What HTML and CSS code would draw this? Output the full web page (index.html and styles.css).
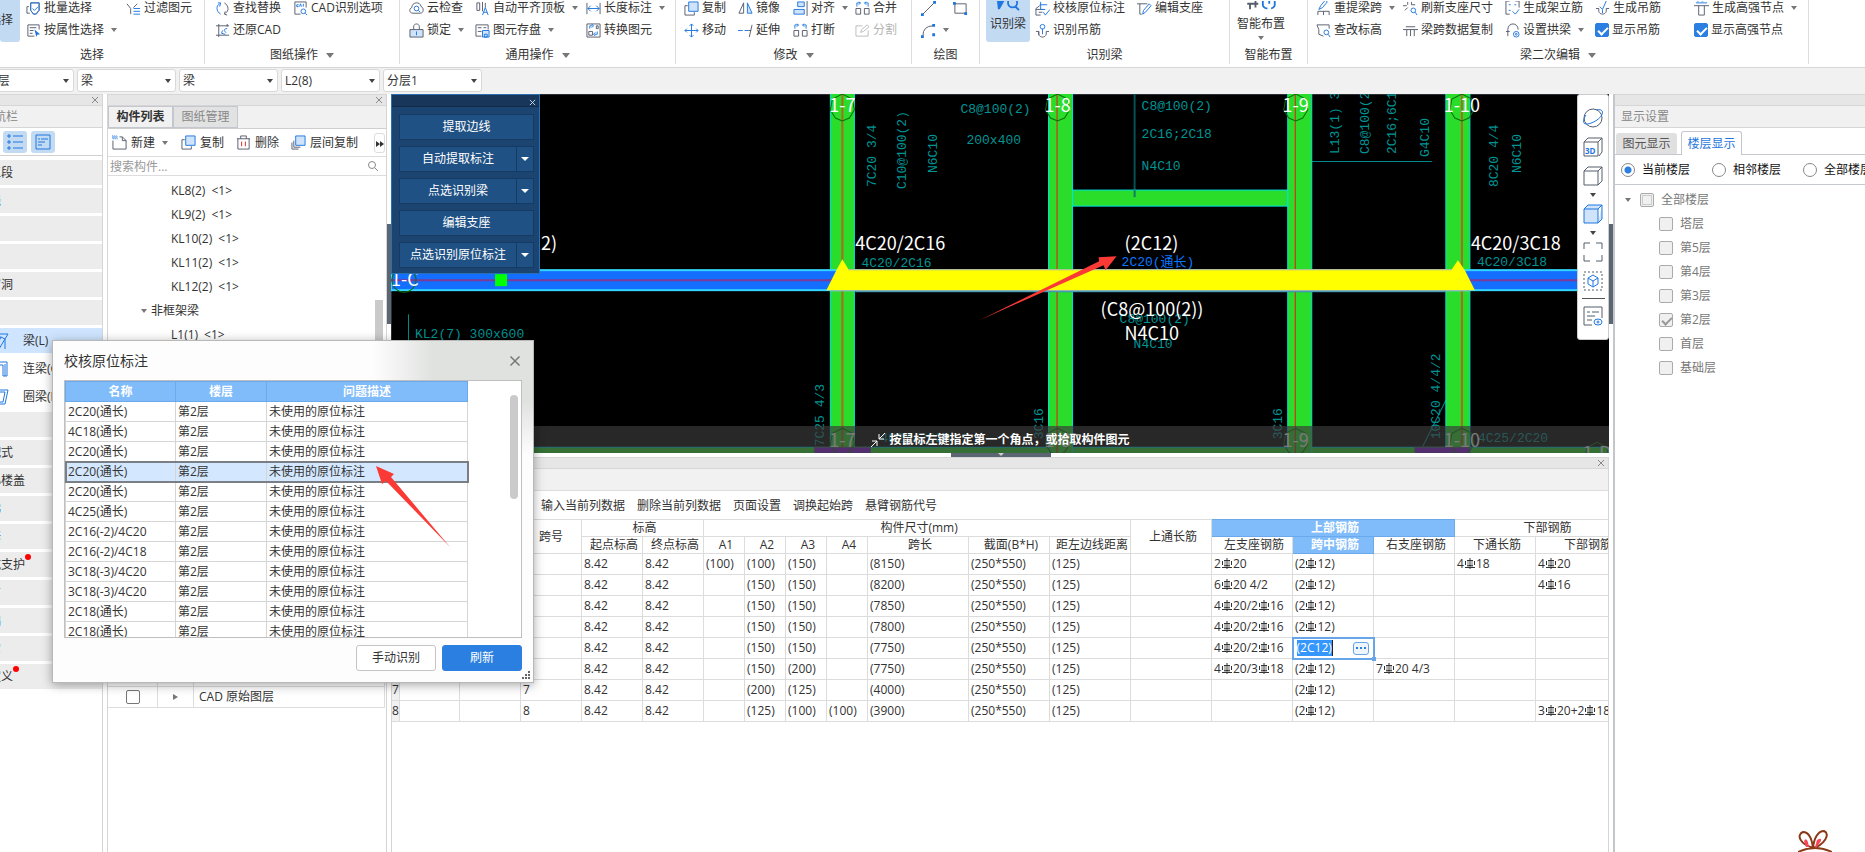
FILE: index.html
```html
<!DOCTYPE html>
<html lang="zh-CN">
<head>
<meta charset="utf-8">
<title>梁平法表格</title>
<link rel="stylesheet" href="styles.css">
</head>
<body>
<svg class="sprite" aria-hidden="true">
  <defs>
    <symbol id="batch" viewBox="0 0 16 16"><path d="M3 6H1v7h3M5 2h9v8l-4 4H8l-3-4z"/><path class="b" d="M5 2h9v8l-3 4H8l-3-4zM7 8l2 2 4-4"/></symbol>
    <symbol id="attr" viewBox="0 0 16 16"><path d="M9 14H2V2h12v5M4 5h7M4 8h4M4 11h3"/><path class="fb" d="M9 7l6 5-3 .500L11 15z"/></symbol>
    <symbol id="filter" viewBox="0 0 16 16"><path d="M1 3l4 5v6M12 3L8 7"/><path class="b" d="M8 8h7M8 11h7M8 14h7"/></symbol>
    <symbol id="swap" viewBox="0 0 16 16"><path class="b" d="M6 14C1 11 1 5 5 3M3 2l3 0-1 4"/><path d="M10 2c5 3 5 9 1 11M13 15l-3-1 1-3"/></symbol>
    <symbol id="cadopt" viewBox="0 0 16 16"><path d="M8 14H2V1h12v6"/><path class="b" d="M4 4h2M7 6l1-3 1 3M11 3v3M4 4v2h2"/><circle class="b" cx="11" cy="11" r="2.500"/><path class="b" d="M13 13l2 2"/></symbol>
    <symbol id="restore" viewBox="0 0 16 16"><path d="M4 1v14M1 3h14M4 13h11M1 13h3M13 1v3"/><path class="b" d="M13 6c-4 0-4 3-1 4M8 8l-1 3 4 1"/></symbol>
    <symbol id="cloud" viewBox="0 0 16 16"><path d="M4 13c-4 0-4-5-1-6 0-6 9-7 10-1 3 1 3 7-1 7z"/><circle class="b" cx="8" cy="8" r="2.500"/><path class="b" d="M10 10l2 2"/></symbol>
    <symbol id="lock" viewBox="0 0 16 16"><path d="M5 7V4c0-4 6-4 6 0v3"/><path class="lb" d="M1 7h14v8H1z"/><path class="b" d="M8 9v4"/></symbol>
    <symbol id="flush" viewBox="0 0 16 16"><path d="M2 2v8h3V2zM8 1v10M11 2v5"/><path class="b" d="M8 15l3-8 3 8M9 12h4"/></symbol>
    <symbol id="save" viewBox="0 0 16 16"><path d="M7 14H1V2h13v5M3 5h4M3 9h4M9 5h3"/><path class="lbb" d="M8 8h7v7H8zM10 12h3v3h-3z"/></symbol>
    <symbol id="dim" viewBox="0 0 16 16"><path d="M1 2v12M15 2v12"/><path class="b" d="M2 8h12M5 5L2 8l3 3M11 5l3 3-3 3"/></symbol>
    <symbol id="convert" viewBox="0 0 16 16"><path d="M1 1h14v14H1z"/><path d="M3 9h4v4H3zM11 3h2v3h-2z"/><path class="b" d="M4 6V3h3M6 1l2 2-2 2M12 9v3H9M10 10l-2 2 2 2"/></symbol>
    <symbol id="copy" viewBox="0 0 16 16"><path d="M4 5H1v10h10v-3"/><path class="lbb" d="M5 1h10v10H5z"/></symbol>
    <symbol id="move" viewBox="0 0 16 16"><path class="b" d="M8 1v14M1 8h14M6 3l2-2 2 2M6 13l2 2 2-2M3 6L1 8l2 2M13 6l2 2-2 2"/></symbol>
    <symbol id="mirror" viewBox="0 0 16 16"><path d="M6 2v11H1z"/><path class="lbb" d="M10 2v11h5z"/></symbol>
    <symbol id="extend" viewBox="0 0 16 16"><path class="b" d="M0 8h5M7 8h4"/><path d="M11 8h3M15 2l-3 13"/></symbol>
    <symbol id="align" viewBox="0 0 16 16"><path class="lbb" d="M5 1h7v5H5zM1 9h11v5H1z"/><path d="M15 0v16"/></symbol>
    <symbol id="break" viewBox="0 0 16 16"><path d="M1 8h5v6H1zM10 8h5v6h-5z"/><path class="b" d="M2 6V2h3M4 1l2 1-2 2M14 6V2h-3M12 1l-2 1 2 2"/></symbol>
    <symbol id="split" viewBox="0 0 16 16"><path class="g" d="M8 3H1v11h13V8M6 10l1-3 6-5 2 2-6 5z"/></symbol>
    <symbol id="line" viewBox="0 0 16 16"><path d="M2 14L14 2"/><path class="fb" d="M0 13h3v3H0zM13 0h3v3h-3z"/></symbol>
    <symbol id="rect" viewBox="0 0 16 16"><path d="M2 3h12v10H2z"/><path class="fb" d="M0 1h3v3H0zM12 12h3v3h-3z"/></symbol>
    <symbol id="arc" viewBox="0 0 16 16"><path d="M2 14Q2 3 13 3"/><path class="fb" d="M0 13h3v3H0zM12 1h3v3h-3zM12 11h3v3h-3z"/></symbol>
    <symbol id="verify" viewBox="0 0 16 16"><path d="M6 15H1V8l4-3M1 9h8M4 12h4"/><path class="b" d="M5 4h8M6 1v8h5M9 12l2 3 5-6"/></symbol>
    <symbol id="support" viewBox="0 0 16 16"><path d="M0 3h11M3 3v11h2"/><path class="b" d="M6 14l1-4 6-7 2 2-6 7z"/></symbol>
    <symbol id="hanger" viewBox="0 0 16 16"><path d="M1 9h3v3c1 4 7 4 8 0V9h3M4 9v4"/><circle class="b" cx="8" cy="4" r="2.500"/><path class="b" d="M8 6v6"/></symbol>
    <symbol id="respan" viewBox="0 0 16 16"><path d="M2 15v-4h12v4M8 11v4"/><path class="b" d="M3 9l2-4 5-6 2 2-5 6z"/></symbol>
    <symbol id="refresh" viewBox="0 0 16 16"><path d="M0 5h4M5 1v3M9 4h4M5 7l-3 3M9 1v3"/><circle class="b" cx="11" cy="10" r="2.500"/><path class="b" d="M13 12l2 3"/></symbol>
    <symbol id="erect" viewBox="0 0 16 16"><path d="M5 0H1v14h4M11 0h4v7"/><path class="b" d="M4 4h2M10 4h2M4 10h2M8 11l3 3 4-5"/></symbol>
    <symbol id="gen" viewBox="0 0 16 16"><path d="M1 8h3v3c1 4 7 4 8 0V8h3"/><path class="b" d="M5 6l3 3 4-9M8 9v4"/></symbol>
    <symbol id="node" viewBox="0 0 16 16"><path class="b" d="M2 2h12M3 0h2M8 0h2"/><path d="M0 5h16M5 5v10h6V5"/></symbol>
    <symbol id="level" viewBox="0 0 16 16"><path d="M8 14L3 12V7L1 2h13v4"/><circle class="b" cx="11" cy="10" r="2.500"/><path class="b" d="M13 12l2 3"/></symbol>
    <symbol id="spancopy" viewBox="0 0 16 16"><path d="M3 4h10M0 7h16M4 7v7M8 7v7M12 7v7"/></symbol>
    <symbol id="arch" viewBox="0 0 16 16"><path d="M3 14V7C3-1 14-1 14 7M1 9h4"/><circle class="b" cx="12" cy="12" r="3"/><circle class="b" cx="12" cy="12" r="1"/></symbol>
    <symbol id="new" viewBox="0 0 16 16"><path d="M1 6v9h14V6l-4-4H8M11 2v4h4"/><path class="b" stroke-dasharray="1 1" d="M0 1h5M1 2h5M0 3h5M1 4h5"/></symbol>
    <symbol id="trash" viewBox="0 0 16 16"><path d="M1 4h14M5 4V1h6v3M2 4v11h12V4"/><path class="r" d="M6 7v5M10 7v5"/></symbol>
    <symbol id="layers" viewBox="0 0 16 16"><path d="M3 6v7h7M1 8v7h7"/><path class="lbb" d="M5 1h10v10H5z"/></symbol>
    <symbol id="cube" viewBox="0 0 20 20"><path d="M1 5h14v14H1zM1 5l4-4h14l-4 4M19 1v14l-4 4"/></symbol>
    <symbol id="rebar" viewBox="0 0 10 11"><path class="k" d="M5 0v11M2 2.500h6M2 7.500h6M.500 3v4M9.500 3v4M0 9.500h10"/><path class="k2" d="M3 3v6M7 3v6"/></symbol>
    <symbol id="x" viewBox="0 0 8 8"><path class="x" d="M1 1l6 6M7 1L1 7"/></symbol>
  </defs>
</svg>

<header class="ribbon">
  <section class="group g1">
    <div class="tools">
      <button class="big clip">选择</button>
      <button class="tool"><svg><use href="#batch"/></svg>批量选择</button>
      <button class="tool"><svg><use href="#filter"/></svg>过滤图元</button>
      <button class="tool span2"><svg><use href="#attr"/></svg>按属性选择<i class="caret"></i></button>
    </div>
    <div class="label">选择</div>
  </section>
  <section class="group g2">
    <div class="tools">
      <button class="tool"><svg><use href="#swap"/></svg>查找替换</button>
      <button class="tool"><svg><use href="#cadopt"/></svg>CAD识别选项</button>
      <button class="tool"><svg><use href="#restore"/></svg>还原CAD</button>
    </div>
    <div class="label">图纸操作<i class="caret"></i></div>
  </section>
  <section class="group g3">
    <div class="tools">
      <button class="tool"><svg><use href="#cloud"/></svg>云检查</button>
      <button class="tool"><svg><use href="#flush"/></svg>自动平齐顶板<i class="caret"></i></button>
      <button class="tool"><svg><use href="#dim"/></svg>长度标注<i class="caret"></i></button>
      <button class="tool"><svg><use href="#lock"/></svg>锁定<i class="caret"></i></button>
      <button class="tool"><svg><use href="#save"/></svg>图元存盘<i class="caret"></i></button>
      <button class="tool"><svg><use href="#convert"/></svg>转换图元</button>
    </div>
    <div class="label">通用操作<i class="caret"></i></div>
  </section>
  <section class="group g4">
    <div class="tools">
      <button class="tool"><svg><use href="#copy"/></svg>复制</button>
      <button class="tool"><svg><use href="#mirror"/></svg>镜像</button>
      <button class="tool"><svg><use href="#align"/></svg>对齐<i class="caret"></i></button>
      <button class="tool"><svg><use href="#break"/></svg>合并</button>
      <button class="tool"><svg><use href="#move"/></svg>移动</button>
      <button class="tool"><svg><use href="#extend"/></svg>延伸</button>
      <button class="tool"><svg><use href="#break"/></svg>打断</button>
      <button class="tool" disabled><svg><use href="#split"/></svg>分割</button>
    </div>
    <div class="label">修改<i class="caret"></i></div>
  </section>
  <section class="group g5">
    <div class="tools">
      <button class="tool" aria-label="直线"><svg><use href="#line"/></svg></button>
      <button class="tool" aria-label="矩形"><svg><use href="#rect"/></svg></button>
      <button class="tool" aria-label="弧线"><svg><use href="#arc"/></svg><i class="caret"></i></button>
    </div>
    <div class="label">绘图</div>
  </section>
  <section class="group g6">
    <div class="tools">
      <button class="big"><svg viewBox="0 0 24 12"><path class="fb" d="M0 0h8l-5 9H1z"/><circle class="b2" cx="17" cy="2" r="5"/><path class="b2" d="M20 6l4 4"/></svg>识别梁</button>
      <button class="tool"><svg><use href="#verify"/></svg>校核原位标注</button>
      <button class="tool"><svg><use href="#support"/></svg>编辑支座</button>
      <button class="tool"><svg><use href="#hanger"/></svg>识别吊筋</button>
    </div>
    <div class="label">识别梁</div>
  </section>
  <section class="group g7">
    <div class="tools">
      <button class="big plain"><svg viewBox="0 0 30 12"><path class="d2" d="M0 3h12M3 3v6M9 0v7"/><path class="b2" d="M17 0v4c0 2 2 4 4 4h1M30 0v4c0 2-2 4-4 4M24 0v3"/></svg>智能布置<i class="caret"></i></button>
    </div>
    <div class="label">智能布置</div>
  </section>
  <section class="group g8">
    <div class="tools">
      <button class="tool"><svg><use href="#respan"/></svg>重提梁跨<i class="caret"></i></button>
      <button class="tool"><svg><use href="#refresh"/></svg>刷新支座尺寸</button>
      <button class="tool"><svg><use href="#erect"/></svg>生成架立筋</button>
      <button class="tool"><svg><use href="#gen"/></svg>生成吊筋</button>
      <button class="tool"><svg><use href="#node"/></svg>生成高强节点<i class="caret"></i></button>
      <button class="tool"><svg><use href="#level"/></svg>查改标高</button>
      <button class="tool"><svg><use href="#spancopy"/></svg>梁跨数据复制</button>
      <button class="tool"><svg><use href="#arch"/></svg>设置拱梁<i class="caret"></i></button>
      <label class="tool"><input class="check on" type="checkbox" checked>显示吊筋</label>
      <label class="tool"><input class="check on" type="checkbox" checked>显示高强节点</label>
    </div>
    <div class="label">梁二次编辑<i class="caret"></i></div>
  </section>
</header>

<nav class="combos">
  <span class="combo"><select aria-label="楼层"><option>第2层</option></select></span>
  <span class="combo"><select aria-label="构件类型"><option>梁</option></select></span>
  <span class="combo"><select aria-label="构件"><option>梁</option></select></span>
  <span class="combo"><select aria-label="构件名称"><option>L2(8)</option></select></span>
  <span class="combo"><select aria-label="分层"><option>分层1</option></select></span>
</nav>

<div class="workspace">
  <aside class="nav panel">
    <div class="grip"><button class="close" aria-label="关闭"><svg><use href="#x"/></svg></button></div>
    <h2 class="nav-title">导航栏</h2>
    <div class="views">
      <button aria-label="列表"><svg viewBox="0 0 16 16"><path class="b" d="M1 1h2v2H1zM1 7h2v2H1zM1 13h2v2H1zM6 2h10M6 8h10M6 14h10"/></svg></button>
      <button aria-label="详情"><svg viewBox="0 0 16 16"><path class="b" d="M1 1h14v14H1zM3 5h2M6 5h7M3 8h7M3 11h4"/></svg></button>
    </div>
    <ul class="modules">
      <li>施工段</li><li class="blue">轴线</li><li>柱</li><li>墙</li><li>门窗洞</li><li>梁</li>
      <li class="sub sel"><svg viewBox="0 0 16 16"><path class="b" d="M0 4l4-3h11l-3 5v10M0 4h8l-2 4M8 4l4 2M12 6L6 16"/></svg>梁(L)</li>
      <li class="sub"><svg viewBox="0 0 16 16"><path class="b" d="M0 1h14v14h-4V4H0M12 3v12"/></svg>连梁(G)</li>
      <li class="sub"><svg viewBox="0 0 16 16"><path class="b" d="M0 1h15l-3 14H0M12 3l-2 10H0M0 3h12"/></svg>圈梁(E)</li>
      <li>板</li><li>装配式</li><li>空心楼盖</li><li class="blue">楼梯</li><li class="blue">装修</li>
      <li>基坑支护<b class="dot"></b></li><li class="blue">土方</li><li class="blue">基础</li><li class="blue">其它</li>
      <li>自定义<b class="dot"></b></li>
    </ul>
  </aside>

  <aside class="parts panel">
    <div class="grip"><button class="close" aria-label="关闭"><svg><use href="#x"/></svg></button></div>
    <div class="tabs"><button class="on">构件列表</button><button>图纸管理</button></div>
    <div class="actions">
      <button class="tool"><svg><use href="#new"/></svg>新建<i class="caret"></i></button>
      <button class="tool"><svg><use href="#copy"/></svg>复制</button>
      <button class="tool"><svg><use href="#trash"/></svg>删除</button>
      <button class="tool"><svg><use href="#layers"/></svg>层间复制</button>
      <button class="more" aria-label="更多"><svg viewBox="0 0 8 6"><path class="fd" d="M0 0l4 3-4 3zM4 0l4 3-4 3z"/></svg></button>
    </div>
    <div class="search"><input aria-label="搜索构件" placeholder="搜索构件..."><svg viewBox="0 0 10 10"><circle cx="4" cy="4" r="3.500"/><path d="M7 7l3 3"/></svg></div>
    <ul class="tree">
      <li>KL8(2)&ensp;&lt;1&gt;</li><li>KL9(2)&ensp;&lt;1&gt;</li><li>KL10(2)&ensp;&lt;1&gt;</li><li>KL11(2)&ensp;&lt;1&gt;</li><li>KL12(2)&ensp;&lt;1&gt;</li>
      <li class="branch"><i class="caret"></i>非框架梁</li><li>L1(1)&ensp;&lt;1&gt;</li>
    </ul>
    <div class="layers">
      <div class="layer"><span><input class="check" type="checkbox" aria-label="已提取的 CAD 图层"></span><span></span><span></span></div>
      <div class="layer"><span><input class="check" type="checkbox" id="raw"></span><span><i class="caret right"></i></span><label for="raw">CAD 原始图层</label></div>
    </div>
  </aside>

  <div class="splitter"><i></i></div>

  <main class="center">
    <section class="viewport">
      <svg class="drawing" viewBox="391 94 1217 359" preserveAspectRatio="xMinYMin slice">
        <rect x="391" y="94" width="1600" height="359" fill="#000"/>
        <g class="cad">
          <path class="thin" d="M408.500 314v30M1294 161.500h137M1422 446l23-46"/>
          <path class="thick" d="M1134 94v103"/>
          <text x="960" y="113">C8@100(2)</text><text x="966" y="144">200x400</text>
          <text x="1141" y="110">C8@100(2)</text><text x="1141" y="138">2C16;2C18</text><text x="1141" y="170">N4C10</text>
          <text x="861" y="267">4C20/2C16</text><text x="1476" y="266">4C20/3C18</text>
          <text x="1119" y="323">C8@100(2)</text><text x="1133" y="348">N4C10</text>
          <text x="415" y="338">KL2(7) 300x600</text>
          <text x="880" y="442">4C25/2C20</text><text x="1477" y="442">4C25/2C20</text>
          <text transform="translate(876 187) rotate(-90)">7C20 3/4</text>
          <text transform="translate(906 189) rotate(-90)">C10@100(2)</text>
          <text transform="translate(937 173) rotate(-90)">N6C10</text>
          <text transform="translate(1338 154) rotate(-90)">L13(1) 300x600</text>
          <text transform="translate(1368 154) rotate(-90)">C8@100(2)</text>
          <text transform="translate(1395 154) rotate(-90)">2C16;6C18</text>
          <text transform="translate(1428 157) rotate(-90)">G4C10</text>
          <text transform="translate(1497 187) rotate(-90)">8C20 4/4</text>
          <text transform="translate(1520 173) rotate(-90)">N6C10</text>
          <text transform="translate(824 446) rotate(-90)">7C25 4/3</text>
          <text transform="translate(1042 439) rotate(-90)">3C16</text>
          <text transform="translate(1281 439) rotate(-90)">3C16</text>
          <text transform="translate(1439 439) rotate(-90)">10C20 4/4/2</text>
        </g>
        <g fill="#2bdd2b" stroke="#00e5e5">
          <rect x="391" y="447" width="1600" height="8"/>
          <rect x="830" y="90" width="24" height="370"/><rect x="1048" y="90" width="24" height="370"/>
          <rect x="1287" y="90" width="24" height="370"/><rect x="1445" y="90" width="24" height="370"/>
          <rect x="1072" y="190" width="215" height="16"/>
        </g>
        <path d="M1134 190v7" stroke="#127b5f" stroke-width="2"/>
        <path d="M842 94v359M1461 94v359" stroke="#ab6a1c" stroke-width="2"/>
        <path d="M1056.500 94v359M1294.500 94v359" stroke="#f01414"/>
        <path d="M814 447h56v6h-56zM1414 447h55v6h-55z" fill="#8214dc"/>
        <rect x="391" y="270" width="1600" height="20" fill="#146eff" stroke="#33d6ff" stroke-width="2"/>
        <path d="M391 280h1600" stroke="#7d3a96" stroke-width="2"/>
        <rect x="495" y="274" width="12" height="12" fill="#0f0" stroke="none"/>
        <path d="M855 291h590" stroke="#2a90b0" stroke-width="2"/>
        <path d="M826 290l10-20 6-11 6 10h603l6-9 7 10 10 20z" fill="#ff0" stroke="none"/>
        <path d="M848 269.500h603M830 290.500h639" stroke="#a5b4b4"/>
        <g class="bubble">
          <path d="M842 94l10 5 2 11-5 8-7 3-7-3-5-8 2-11zM1057 94l10 5 2 11-5 8-7 3-7-3-5-8 2-11zM1295 94l10 5 2 11-5 8-7 3-7-3-5-8 2-11zM1461 94l10 5 2 11-5 8-7 3-7-3-5-8 2-11z"/>
          <path d="M842 428l10 5 2 11-5 8-7 3-7-3-5-8 2-11zM1057 428l10 5 2 11-5 8-7 3-7-3-5-8 2-11zM1295 428l10 5 2 11-5 8-7 3-7-3-5-8 2-11zM1461 428l10 5 2 11-5 8-7 3-7-3-5-8 2-11zM1596 442l10 5 2 11h-24l2-11z"/>
          <circle cx="404" cy="280" r="12"/>
        </g>
        <g class="mark">
          <g text-anchor="middle">
            <text x="842" y="112">1-7</text><text x="1057" y="112">1-8</text><text x="1295" y="112">1-9</text><text x="1461" y="112">1-10</text>
            <text x="842" y="447">1-7</text><text x="1057" y="447">1-8</text><text x="1295" y="447">1-9</text><text x="1461" y="447">1-10</text><text x="1596" y="460">1-D</text>
          </g>
          <text x="391" y="286">1-C</text>
          <text x="557" y="250" text-anchor="end">(2C12)</text>
          <text x="855" y="250">4C20/2C16</text><text x="1124" y="250">(2C12)</text><text x="1100" y="316">(C8@100(2))</text>
          <text x="1124" y="340">N4C10</text><text x="1470" y="250">4C20/3C18</text>
        </g>
        <text class="picked" x="1121" y="266">2C20(通长)</text>
        <path class="pointer" d="M979 320l119.500-59-.500-4 18-1-11 14-2-5z"/>
      </svg>

      <div class="prompt"><svg viewBox="0 0 16 16"><path d="M1 15l6-6M2 9h5v5M15 1L9 7M9 2v5h5"/></svg>按鼠标左键指定第一个角点，或拾取构件图元</div>

      <div class="palette">
        <div class="palette-head"><button aria-label="关闭"><svg><use href="#x"/></svg></button></div>
        <div class="palette-body">
          <button>提取边线</button>
          <button class="drop"><span>自动提取标注</span><i class="caret"></i></button>
          <button class="drop"><span>点选识别梁</span><i class="caret"></i></button>
          <button>编辑支座</button>
          <button class="drop"><span>点选识别原位标注</span><i class="caret"></i></button>
        </div>
      </div>

      <div class="viewbar">
        <button aria-label="动态观察"><svg viewBox="0 0 20 20"><circle cx="10" cy="10" r="9"/><path class="b" d="M3 7C-4 18 5 18 14 12 21 7 22 0 13 2"/></svg></button>
        <button aria-label="三维"><svg viewBox="0 0 20 20"><path d="M1 10V5l4-4h14v14l-3 4M1 5h14v14M15 5l4-4M1 10v9h14"/><text x="2" y="17">3D</text></svg></button>
        <button aria-label="顶视图"><svg><use href="#cube"/></svg></button>
        <i class="caret"></i>
        <button class="active" aria-label="实体显示"><svg><use href="#cube"/></svg></button>
        <i class="caret"></i>
        <button aria-label="全屏"><svg viewBox="0 0 20 20"><path d="M1 7V1h6M13 1h6v6M19 13v6h-6M7 19H1v-6"/></svg></button>
        <button aria-label="局部三维"><svg viewBox="0 0 20 20"><path stroke-dasharray="2 2" d="M1 1h18v18H1z"/><path class="b" d="M10 4l5 3v6l-5 3-5-3V7zM5 7l5 3 5-3M10 10v6"/></svg></button>
        <hr>
        <button aria-label="显示设置"><svg viewBox="0 0 20 20"><path d="M9 19H1V1h18v11M4 6h3M9 6h7M4 10h8M4 14h5"/><ellipse class="b" cx="15" cy="16" rx="4" ry="3"/><circle class="b" cx="15" cy="16" r="1"/></svg></button>
      </div>
    </section>
    <div class="hsplit"><i class="caret"></i></div>

    <section class="sheet">
      <div class="grip"><button class="close" aria-label="关闭"><svg><use href="#x"/></svg></button></div>
      <div class="sheet-title"></div>
      <div class="sheet-tools"><button>输入当前列数据</button><button>删除当前列数据</button><button>页面设置</button><button>调换起始跨</button><button>悬臂钢筋代号</button></div>
      <div class="sheet-scroll">
      <table class="spans">
        <colgroup><col class="w8"><col class="w60"><col class="w61"><col class="w61"><col class="w61"><col class="w61"><col class="w41"><col class="w41"><col class="w41"><col class="w41"><col class="w101"><col class="w81"><col class="w81"><col class="w81"><col class="w81"><col class="w81"><col class="w81"><col class="w81"><col class="w101"></colgroup>
        <thead>
          <tr><th rowspan="2"></th><th rowspan="2"></th><th rowspan="2"></th><th rowspan="2" class="up">跨号</th><th colspan="2">标高</th><th colspan="7">构件尺寸(mm)</th><th rowspan="2">上通长筋</th><th colspan="3" class="hot">上部钢筋</th><th colspan="2">下部钢筋</th></tr>
          <tr><th>起点标高</th><th>终点标高</th><th>A1</th><th>A2</th><th>A3</th><th>A4</th><th>跨长</th><th>截面(B*H)</th><th class="fit">距左边线距离</th><th>左支座钢筋</th><th class="hot">跨中钢筋</th><th>右支座钢筋</th><th>下通长筋</th><th>下部钢筋</th></tr>
        </thead>
        <tbody>
          <tr><th>1</th><td></td><td></td><td>1</td><td>8.42</td><td>8.42</td><td>(100)</td><td>(100)</td><td>(150)</td><td></td><td>(8150)</td><td>(250*550)</td><td>(125)</td><td></td><td>2<svg><use href="#rebar"/></svg>20</td><td>(2<svg><use href="#rebar"/></svg>12)</td><td></td><td>4<svg><use href="#rebar"/></svg>18</td><td>4<svg><use href="#rebar"/></svg>20</td></tr>
          <tr><th>2</th><td></td><td></td><td>2</td><td>8.42</td><td>8.42</td><td></td><td>(150)</td><td>(150)</td><td></td><td>(8200)</td><td>(250*550)</td><td>(125)</td><td></td><td>6<svg><use href="#rebar"/></svg>20 4/2</td><td>(2<svg><use href="#rebar"/></svg>12)</td><td></td><td></td><td>4<svg><use href="#rebar"/></svg>16</td></tr>
          <tr><th>3</th><td></td><td></td><td>3</td><td>8.42</td><td>8.42</td><td></td><td>(150)</td><td>(150)</td><td></td><td>(7850)</td><td>(250*550)</td><td>(125)</td><td></td><td>4<svg><use href="#rebar"/></svg>20/2<svg><use href="#rebar"/></svg>16</td><td>(2<svg><use href="#rebar"/></svg>12)</td><td></td><td></td><td></td></tr>
          <tr><th>4</th><td></td><td></td><td>4</td><td>8.42</td><td>8.42</td><td></td><td>(150)</td><td>(150)</td><td></td><td>(7800)</td><td>(250*550)</td><td>(125)</td><td></td><td>4<svg><use href="#rebar"/></svg>20/2<svg><use href="#rebar"/></svg>16</td><td>(2<svg><use href="#rebar"/></svg>12)</td><td></td><td></td><td></td></tr>
          <tr><th>5</th><td></td><td></td><td>5</td><td>8.42</td><td>8.42</td><td></td><td>(150)</td><td>(150)</td><td></td><td>(7750)</td><td>(250*550)</td><td>(125)</td><td></td><td>4<svg><use href="#rebar"/></svg>20/2<svg><use href="#rebar"/></svg>16</td><td class="editing"><div><mark>(2C12)</mark><button aria-label="更多"><i></i><i></i><i></i></button></div></td><td></td><td></td><td></td></tr>
          <tr><th>6</th><td></td><td></td><td>6</td><td>8.42</td><td>8.42</td><td></td><td>(150)</td><td>(200)</td><td></td><td>(7750)</td><td>(250*550)</td><td>(125)</td><td></td><td>4<svg><use href="#rebar"/></svg>20/3<svg><use href="#rebar"/></svg>18</td><td>(2<svg><use href="#rebar"/></svg>12)</td><td>7<svg><use href="#rebar"/></svg>20 4/3</td><td></td><td></td></tr>
          <tr><th>7</th><td></td><td></td><td>7</td><td>8.42</td><td>8.42</td><td></td><td>(200)</td><td>(125)</td><td></td><td>(4000)</td><td>(250*550)</td><td>(125)</td><td></td><td></td><td>(2<svg><use href="#rebar"/></svg>12)</td><td></td><td></td><td></td></tr>
          <tr><th>8</th><td></td><td></td><td>8</td><td>8.42</td><td>8.42</td><td></td><td>(125)</td><td>(100)</td><td>(100)</td><td>(3900)</td><td>(250*550)</td><td>(125)</td><td></td><td></td><td>(2<svg><use href="#rebar"/></svg>12)</td><td></td><td></td><td>3<svg><use href="#rebar"/></svg>20+2<svg><use href="#rebar"/></svg>18</td></tr>
        </tbody>
      </table>
      </div>
    </section>
  </main>

  <div class="splitter"><i></i></div>

  <aside class="display panel">
    <div class="grip"></div>
    <h2>显示设置</h2>
    <div class="cards"><button>图元显示</button><button class="on">楼层显示</button></div>
    <div class="radios">
      <label><input type="radio" name="scope" checked>当前楼层</label>
      <label><input type="radio" name="scope">相邻楼层</label>
      <label><input type="radio" name="scope">全部楼层</label>
    </div>
    <ul class="floors">
      <li class="root"><i class="caret"></i><label><input class="check off mixed" type="checkbox" disabled>全部楼层</label></li>
      <li><label><input class="check off" type="checkbox" disabled>塔层</label></li>
      <li><label><input class="check off" type="checkbox" disabled>第5层</label></li>
      <li><label><input class="check off" type="checkbox" disabled>第4层</label></li>
      <li><label><input class="check off" type="checkbox" disabled>第3层</label></li>
      <li><label><input class="check off" type="checkbox" disabled checked>第2层</label></li>
      <li><label><input class="check off" type="checkbox" disabled>首层</label></li>
      <li><label><input class="check off" type="checkbox" disabled>基础层</label></li>
    </ul>
    <svg class="rabbit" viewBox="0 0 34 22"><path d="M15 18C2 14-2 5 5 2c6 0 9 8 10 16zM15 18C16 8 20 1 26 1c7 3 0 14-11 17M0 22q17-8 34 0"/><path class="ear" d="M8 17l-2-6q2-4 4 1l1 5zM17 17l2-7q5-3 4 1l-5 7z"/></svg>
  </aside>
</div>

<section class="dialog" role="dialog" aria-labelledby="dlg">
  <div class="dialog-head"><h1 id="dlg">校核原位标注</h1><button aria-label="关闭"><svg><use href="#x"/></svg></button></div>
  <div class="issues">
    <table>
      <thead><tr><th>名称</th><th>楼层</th><th>问题描述</th></tr></thead>
      <tbody>
        <tr><td>2C20(通长)</td><td>第2层</td><td>未使用的原位标注</td></tr>
        <tr><td>4C18(通长)</td><td>第2层</td><td>未使用的原位标注</td></tr>
        <tr><td>2C20(通长)</td><td>第2层</td><td>未使用的原位标注</td></tr>
        <tr class="sel"><td>2C20(通长)</td><td>第2层</td><td>未使用的原位标注</td></tr>
        <tr><td>2C20(通长)</td><td>第2层</td><td>未使用的原位标注</td></tr>
        <tr><td>4C25(通长)</td><td>第2层</td><td>未使用的原位标注</td></tr>
        <tr><td>2C16(-2)/4C20</td><td>第2层</td><td>未使用的原位标注</td></tr>
        <tr><td>2C16(-2)/4C18</td><td>第2层</td><td>未使用的原位标注</td></tr>
        <tr><td>3C18(-3)/4C20</td><td>第2层</td><td>未使用的原位标注</td></tr>
        <tr><td>3C18(-3)/4C20</td><td>第2层</td><td>未使用的原位标注</td></tr>
        <tr><td>2C18(通长)</td><td>第2层</td><td>未使用的原位标注</td></tr>
        <tr><td>2C18(通长)</td><td>第2层</td><td>未使用的原位标注</td></tr>
      </tbody>
    </table>
    <i class="thumb"></i>
  </div>
  <div class="dialog-foot"><button>手动识别</button><button class="primary">刷新</button></div>
  <svg class="resize" viewBox="0 0 8 8"><path d="M6 0h2v2H6zM3 3h2v2H3zM6 3h2v2H6zM0 6h2v2H0zM3 6h2v2H3zM6 6h2v2H6z"/></svg>
  <svg class="arrow" viewBox="0 0 74 81"><path d="M0 0l18 8-3 3 59 70L10 15l-4 3z"/></svg>
</section>
</body>
</html>
```

FILE: styles.css
```css
* { box-sizing: border-box; }
html, body { height: 100%; }
body {
  margin: 0;
  display: flex;
  flex-direction: column;
  overflow: hidden;
  background: #fff;
  color: #333;
  font: 12px/16px "Open Sans", "Noto Sans CJK SC", sans-serif;
}
button, select, input { font: inherit; color: inherit; margin: 0; }
button { padding: 0; border: 0; background: none; white-space: nowrap; }
h1, h2, ul { margin: 0; padding: 0; font-weight: 400; list-style: none; }
.sprite { position: absolute; width: 0; height: 0; }

svg { fill: none; stroke: #555c6b; stroke-width: 1; flex: none; }
svg .b { stroke: #1f76e0; }
svg .b2 { stroke: #1f76e0; stroke-width: 2; }
svg .d2 { stroke-width: 2; }
svg .r { stroke: #d22; }
svg .g { stroke: #bbb; }
svg .fb { fill: #1f76e0; stroke: none; }
svg .fd { fill: #333; stroke: none; }
svg .lb { fill: #cfe3fa; }
svg .lbb { fill: #cfe3fa; stroke: #1f76e0; }
svg .k { stroke: #333; }
svg .k2 { stroke: #777; }

.caret {
  display: inline-block;
  flex: none;
  width: 0;
  height: 0;
  border: 3px solid transparent;
  border-top: 4px solid #777;
  border-bottom: 0;
}
.caret.right { border: 3px solid transparent; border-left: 5px solid #777; border-right: 0; }

/* ribbon */
.ribbon { display: flex; flex: none; height: 68px; overflow: hidden; border-bottom: 1px solid #d6d6d6; }
.group { display: flex; flex-direction: column; justify-content: flex-end; flex: none; padding-bottom: 1px; border-right: 1px solid #ddd; height: 64px; }
.tools { display: grid; flex: none; grid-template-rows: 22px 22px; margin-bottom: 6px; }
.tool { display: flex; align-items: center; gap: 3px; white-space: nowrap; text-align: left; }
.tool svg { width: 15px; height: 15px; }
.tool .caret { margin-left: 4px; }
.tool:disabled { color: #b5b5b5; }
.label { display: flex; align-items: center; justify-content: center; gap: 8px; height: 18px; }
.label .caret { border-width: 5px 4px 0; }
.big { grid-row: 1 / 3; display: flex; flex-direction: column; align-items: center; justify-content: flex-start; gap: 4px; height: 45px; padding-top: 4px; border-radius: 0 0 3px 3px; background: #c3daf3; }
.big svg { width: 24px; height: 11px; }
.big.plain { background: none; }
.big.clip { padding: 15px 7px 0 0; align-items: flex-end; }
.g1 { width: 205px; } .g1 .tools { grid-template-columns: 20px 94px 1fr; column-gap: 6px; } .g1 .span2 { grid-column: 2 / 4; }
.g1 .label { padding-right: 20px; }
.g2 { width: 195px; } .g2 .tools { grid-template-columns: 78px 1fr; padding-left: 10px; }
.g3 { width: 276px; } .g3 .tools { grid-template-columns: 66px 111px 1fr; padding-left: 9px; }
.g4 { width: 236px; } .g4 .tools { grid-template-columns: 54px 55px 62px 1fr; padding-left: 8px; }
.g5 { width: 68px; } .g5 .tools { grid-template-columns: 32px 1fr; padding-left: 9px; }
.g6 { width: 250px; } .g6 .tools { grid-template-columns: 44px 97px 1fr; column-gap: 5px; padding-left: 6px; }
.g7 { width: 78px; } .g7 .big svg { width: 30px; }
.g7 .tools { grid-template-columns: 62px; }
.g8 { width: 501px; } .g8 .tools { grid-template-columns: 87px 102px 90px 99px 1fr; padding-left: 8px; }

.check { appearance: none; flex: none; width: 14px; height: 14px; border: 1px solid #777; border-radius: 2px; background: #fff; position: relative; }
.check.on { background: #2b7fe0; border-color: #2b7fe0; }
.check:checked::after { content: ""; position: absolute; left: 4px; top: 1px; width: 4px; height: 8px; border: solid #fff; border-width: 0 2px 2px 0; transform: rotate(45deg); }
.check.off { border-color: #aaa; background: #f0f0f0; }
.check.off:checked::after { border-color: #999; }
.check.mixed::after { content: ""; position: absolute; inset: 1px; border: 1px solid #ccc; }

/* combo bar */
.combos { display: flex; flex: none; gap: 3px; height: 26px; padding: 1px 0 2px; background: #f1f1f1; margin-left: -25px; }
.combo { position: relative; width: 99px; }
.combo select { appearance: none; width: 100%; height: 23px; padding: 0 0 0 3px; border: 1px solid #d8d8d8; border-radius: 3px; background: #fff; }
.combo::after { content: ""; position: absolute; right: 5px; top: 10px; border: 3px solid transparent; border-top: 4px solid #444; border-bottom: 0; }

/* workspace */
.workspace { display: flex; flex: 1; min-height: 0; background: #fff; }
.panel { flex: none; display: flex; flex-direction: column; overflow: hidden; border-right: 1px solid #d5d5d5; }
.grip { display: flex; flex: none; justify-content: flex-end; align-items: center; height: 12px; padding-right: 3px; background: #e6e6e6; border: solid #d6d6d6; border-width: 1px 0; }
.close, .dialog-head button { display: flex; }
.grip svg { width: 8px; height: 8px; stroke: #888; }

.nav { width: 103px; margin-right: 4px; }
.nav-title, .display h2 { flex: none; height: 22px; background: #f1f1f1; border-bottom: 1px solid #d6d6d6; color: #888; font-size: 12px; line-height: 22px; }
.nav-title { text-indent: -18px; }
.views { display: flex; flex: none; gap: 4px; height: 28px; padding: 3px; border-bottom: 1px solid #d0d0d0; }
.views button { display: grid; place-items: center; width: 24px; height: 22px; border-radius: 3px; background: #c3daf3; }
.views svg { width: 16px; height: 16px; }
.modules { display: grid; gap: 3px; padding-top: 4px; }
.modules li { display: flex; align-items: center; height: 25px; margin-left: -23px; background: #ececec; }
.modules .blue { color: #1f76e0; }
.modules .sub { margin-left: -7px; gap: 14px; background: #fff; white-space: nowrap; }
.modules .sub.sel { background: #cfe5ff; }
.modules .sub svg { width: 16px; height: 18px; }
.dot { align-self: flex-start; width: 6px; height: 6px; margin-top: 2px; border-radius: 50%; background: #f00; }

.parts { width: 280px; border-left: 1px solid #d5d5d5; }
.tabs { display: flex; flex: none; height: 23px; background: #f1f1f1; border-bottom: 1px solid #cfcfcf; }
.tabs button { width: 65px; border: 1px solid #c4c8ce; background: #e2e2e2; color: #888; }
.tabs .on { background: #f1f1f1; color: #333; font-weight: 700; }
.actions { display: flex; flex: none; align-items: center; gap: 12px; height: 28px; padding-left: 4px; border-bottom: 1px solid #ddd; }
.actions .tool { gap: 4px; }
.actions .tool .caret { margin: 0 1px 0 3px; }
.more { width: 11px; height: 20px; margin: 0 1px 0 auto; border: 1px solid #ddd; border-radius: 3px; }
.more svg { width: 8px; height: 6px; }
.search { display: flex; flex: none; align-items: center; height: 19px; padding: 0 8px 0 2px; border-bottom: 1px solid #ddd; }
.search input { flex: 1; min-width: 0; height: 17px; padding: 0; border: 0; outline: 0; }
.search input::placeholder { color: #999; opacity: 1; }
.search svg { width: 10px; height: 10px; stroke: #888; }
.tree { flex: 1; min-height: 0; overflow: hidden; padding-top: 3px; background: linear-gradient(#cacaca, #cacaca) 267px 124px / 8px 120px no-repeat; }
.tree li { height: 24px; padding-left: 63px; line-height: 24px; }
.tree .branch { display: flex; align-items: center; gap: 4px; padding-left: 33px; }
.layers { flex: none; height: 186px; margin-right: 1px; }
.layer { display: grid; grid-template-columns: 50px 36px 1fr; height: 21px; border-bottom: 1px solid #ddd; }
.layer > * { display: flex; align-items: center; justify-content: center; border-right: 1px solid #ddd; }
.layer > :last-child { justify-content: flex-start; padding-left: 5px; }

.splitter { flex: none; width: 4px; }
.splitter i { display: block; height: 100px; margin-top: 130px; background: #5b6672; }

/* drawing viewport */
.center { flex: 1; min-width: 0; display: flex; flex-direction: column; }
.viewport { position: relative; flex: none; height: 359px; overflow: hidden; background: #000; }
.drawing { display: block; width: 100%; height: 359px; }
.cad text { fill: #009494; stroke: none; font: 13px "Liberation Mono", monospace; }
.picked { fill: #0a78ff; stroke: none; font: 13px "Liberation Mono", "Noto Sans CJK SC", monospace; }
.cad path { stroke: #008c8c; }
.cad .thick { stroke: #045252; stroke-width: 2; }
.bubble { stroke: #0a6e0a; }
.mark text { fill: #fff; stroke: none; font: 18px "Noto Sans CJK SC", sans-serif; }
.pointer { fill: #fb3a36; stroke: none; }
.prompt { position: absolute; inset: auto 0 0 0; display: flex; justify-content: center; gap: 3px; height: 27px; padding: 6px 0 0 0; background: rgba(59, 59, 59, .68); color: #fff; font-weight: 700; }
.prompt svg { width: 16px; height: 16px; stroke: #fff; }

.palette { position: absolute; left: 0; top: 0; width: 149px; border: 1px solid #2a6fb0; background: #1c4470; color: #fff; }
.palette-head { display: flex; align-items: center; justify-content: flex-end; height: 12px; padding: 3px 3px 0 0; background: #17365a; border-bottom: 1px solid #102a48; }
.palette-head svg { width: 7px; height: 7px; stroke: #cfe3fa; display: block; }
.palette-body { display: grid; gap: 6px; padding: 7px 5px 5px 7px; }
.palette-body button { height: 26px; border: 1px solid #163a61; background: #1f5184; }
.palette-body .drop { display: grid; grid-template-columns: 1fr 16px; align-items: center; justify-items: center; }
.palette-body .caret { border-top-color: #fff; border-width: 4px 4px 0; }
.palette-body .drop span { width: 100%; line-height: 24px; border-right: 1px solid #163a61; }

.viewbar { position: absolute; right: 0; top: 0; display: flex; flex-direction: column; align-items: center; gap: 9px; width: 32px; height: 246px; padding-top: 13px; border: 1px solid #ccc; border-radius: 3px; background: #fff; }
.viewbar button { display: flex; }
.viewbar svg { width: 20px; height: 20px; }
.viewbar .caret { border-top-color: #444; margin: -2px 0; }
.viewbar text { fill: #1f76e0; stroke: none; font: 700 8px "Open Sans", sans-serif; }
.viewbar .active svg { stroke: #1f76e0; fill: #cfe3fa; }
.viewbar hr { width: 23px; margin: -2px 0; border: 0; border-top: 1px solid #555; }

.hsplit { flex: none; height: 4px; display: flex; justify-content: center; width: 100px; margin-left: 46%; background: #5b6672; }
.hsplit .caret { border-top-color: #ccc; border-top-width: 3px; }

/* span sheet */
.sheet { flex: 1; min-height: 0; display: flex; flex-direction: column; border-left: 1px solid #d5d5d5; border-right: 1px solid #d5d5d5; }
.sheet-title { flex: none; height: 22px; background: #f1f1f1; border-bottom: 1px solid #ddd; }
.sheet-tools { display: flex; flex: none; align-items: center; gap: 12px; height: 28px; padding: 2px 0 0 149px; }
.sheet-scroll { flex: 1; min-height: 0; overflow: hidden; }
.spans { width: 1245px; margin-left: -1px; table-layout: fixed; border-collapse: collapse; line-height: 16px; }
.spans th, .spans td { height: 21px; padding: 0 0 0 2px; border: 1px solid #dcdcdc; font-weight: 400; text-align: left; white-space: nowrap; overflow: hidden; }
.spans thead th { height: 17px; padding: 0 0 0 4px; text-align: center; line-height: 16px; }
.spans thead .fit { padding-left: 4px; }
.spans thead .up { padding: 0; }
.spans thead .hot { background: #80bbfa; border-color: #6aa9ec; color: #fff; font-weight: 700; }
.spans tbody th { padding: 0; background: #f1f1f1; }
.spans td svg { width: 10px; height: 11px; margin: 0 1px; vertical-align: -1px; }
.spans td.editing { position: relative; padding: 0; border: 2px solid #65a5e8; overflow: visible; }
.editing::after { content: ""; position: absolute; right: -3px; bottom: -3px; width: 4px; height: 4px; background: #65a5e8; }
.editing div { display: flex; align-items: center; justify-content: space-between; height: 19px; padding: 0 4px 0 3px; }
.editing mark { background: #3596fd; color: #fff; border-right: 1px solid #222; }
.editing button { display: flex; align-items: center; justify-content: center; gap: 2px; width: 16px; height: 13px; border: 1px solid #65a5e8; border-radius: 3px; background: #eef5fd; }
.editing button i { width: 2px; height: 2px; background: #2b7fe0; }
.w8 { width: 8px; } .w41 { width: 41px; } .w60 { width: 60px; } .w61 { width: 61px; } .w81 { width: 81px; } .w101 { width: 101px; }

/* display settings */
.display { position: relative; width: 252px; border: 0; border-left: 2px solid #c3c7cc; }
.display h2 { padding-left: 6px; }
.cards { display: flex; flex: none; align-items: flex-end; gap: 4px; height: 27px; padding-left: 1px; border-bottom: 1px solid #c4c8ce; }
.cards button { width: 61px; height: 21px; border-radius: 3px 3px 0 0; background: #e0e0e0; color: #555; }
.cards .on { height: 24px; margin-bottom: -1px; border: 1px solid #c4c8ce; border-bottom: 0; background: #fff; color: #1f76e0; }
.radios { display: flex; flex: none; gap: 22px; height: 30px; padding-left: 6px; border-bottom: 1px solid #c4c8ce; color: #111; }
.radios label { display: flex; flex: none; align-items: center; gap: 7px; white-space: nowrap; }
.radios input { appearance: none; width: 14px; height: 14px; border: 1px solid #888; border-radius: 50%; }
.radios input:checked { background: radial-gradient(#2b7fe0 3px, #fff 4px); }
.floors { padding-top: 3px; color: #777; }
.floors li { display: flex; align-items: center; height: 24px; padding-left: 44px; }
.floors .root { gap: 9px; padding-left: 10px; }
.floors label { display: flex; align-items: center; gap: 7px; }
.rabbit { position: absolute; right: 33px; bottom: 0; width: 34px; height: 22px; stroke: #8a3a16; stroke-width: 2; }
.rabbit .ear { fill: #f8465c; stroke: none; }

/* check dialog */
.dialog { position: absolute; left: 52px; top: 340px; width: 482px; padding: 0 11px 11px; border: 1px solid #b8b8b8; background: linear-gradient(to bottom, rgba(253, 253, 253, 0) 60px, #fdfdfd 115px), linear-gradient(to right, #fdfdfd 320px, #e0e2e0 380px); box-shadow: 0 2px 10px rgba(0, 0, 0, .35); }
.dialog-head { display: flex; align-items: center; justify-content: space-between; height: 39px; padding-right: 1px; }
.dialog h1 { font-size: 14px; line-height: 20px; }
.dialog-head svg { width: 12px; height: 12px; stroke: #777; }
.issues { display: flex; align-items: flex-start; justify-content: space-between; height: 258px; overflow: hidden; border: 1px solid #bfbfbf; background: #fff; }
.issues table { width: 403px; table-layout: fixed; border-collapse: collapse; }
.issues th, .issues td { height: 20px; padding: 0 0 0 2px; border: 1px solid #d5d5d5; text-align: left; font-weight: 400; white-space: nowrap; }
.issues th { padding: 0; background: #80bbfa; border-color: #6aa9ec; color: #fff; font-weight: 700; text-align: center; }
.issues th:nth-child(1) { width: 110px; }
.issues th:nth-child(2) { width: 91px; }
.issues .sel { outline: 2px solid #7a7f85; outline-offset: -1px; background: #d3e8ff; }
.thumb { width: 8px; height: 104px; margin: 14px 3px 0 0; border-radius: 4px; background: #cacaca; }
.dialog-foot { display: flex; justify-content: flex-end; gap: 6px; margin-top: 7px; }
.dialog-foot button { width: 80px; height: 26px; border: 1px solid #c4c4c4; border-radius: 3px; background: #fff; }
.dialog-foot .primary { border-color: #2b7fe0; background: #2b7fe0; color: #fff; }
.resize { position: absolute; right: 3px; bottom: 3px; width: 8px; height: 8px; fill: #666; stroke: none; }
.arrow { position: absolute; left: 323px; top: 125px; width: 74px; height: 81px; fill: #fb3a36; stroke: none; }
```
